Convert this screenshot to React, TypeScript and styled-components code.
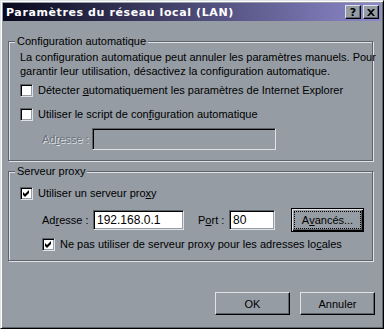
import React from 'react'
import styled, { createGlobalStyle } from 'styled-components'

const FACE = '#959ca4'
const LIGHT = '#dfe3e8'
const SHADOW = '#5d636a'
const DARK = '#000'

const GlobalStyle = createGlobalStyle`
  html, body {
    margin: 0;
    padding: 0;
    background: ${FACE};
  }
  body {
    font-family: "Liberation Sans", Arial, sans-serif;
    font-size: 11px;
    color: #000;
  }
`

const App = () => {
  return (
    <>
      <GlobalStyle />
      <Window>
        <TitleBar>
          <TitleText>Paramètres du réseau local (LAN)</TitleText>
          <TitleButtons>
            <TitleButton>?</TitleButton>
            <TitleButton>
              <svg width="8" height="7" viewBox="0 0 8 7">
                <path d="M0 0h2l2 2 2-2h2L5 3.5 8 7H6L4 5 2 7H0l3-3.5z" fill="#000" />
              </svg>
            </TitleButton>
          </TitleButtons>
        </TitleBar>

        <Body>
          <Group>
            <Legend>Configuration automatique</Legend>
            <Stack $pt={2} $pb={10}>
              <Description>
                La configuration automatique peut annuler les paramètres manuels. Pour
                <br />
                garantir leur utilisation, désactivez la configuration automatique.
              </Description>
              <CheckRow $mt={4}>
                <CheckBox />
                <span>
                  Détecter <u>a</u>utomatiquement les paramètres de Internet Explorer
                </span>
              </CheckRow>
              <CheckRow $mt={8}>
                <CheckBox />
                <span>
                  Utiliser le script de con<u>f</u>iguration automatique
                </span>
              </CheckRow>
              <FieldRow $mt={6} $h={22}>
                <FieldLabel $w={50} $disabled>
                  Ad<u>r</u>esse :
                </FieldLabel>
                <TextField $w={184} $h={22} $disabled />
              </FieldRow>
            </Stack>
          </Group>

          <Group $mt={3}>
            <Legend>Serveur proxy</Legend>
            <Stack $pt={7} $pb={8}>
              <CheckRow>
                <CheckBox checked />
                <span>
                  Utiliser un serveur pro<u>x</u>y
                </span>
              </CheckRow>
              <FieldRow $mt={7} $h={24}>
                <FieldLabel $w={51}>
                  Ad<u>r</u>esse :
                </FieldLabel>
                <TextField $w={91} $h={20}>192.168.0.1</TextField>
                <FieldLabel $w={31} $ml={14}>
                  P<u>o</u>rt :
                </FieldLabel>
                <TextField $w={46} $h={20}>80</TextField>
                <DefaultButton>
                  <FocusRing>
                    A<u>v</u>ancés...
                  </FocusRing>
                </DefaultButton>
              </FieldRow>
              <CheckRow $mt={4} $ml={22}>
                <CheckBox checked />
                <span>
                  Ne pas utiliser de serveur proxy pour les adresses lo<u>c</u>ales
                </span>
              </CheckRow>
            </Stack>
          </Group>

          <ButtonBar>
            <PushButton>OK</PushButton>
            <PushButton>Annuler</PushButton>
          </ButtonBar>
        </Body>
      </Window>
    </>
  )
}

const CheckBox = ({ checked }: { checked?: boolean }) => (
  <Box>
    {checked && (
      <svg width="7" height="7" viewBox="0 0 7 7">
        <path d="M0 2l2 2 4-4v3L2 7 0 5z" fill="#000" />
      </svg>
    )}
  </Box>
)

export default App

const Window = styled.div`
  width: 384px;
  height: 329px;
  box-sizing: border-box;
  border: 1px solid;
  border-color: ${LIGHT} ${DARK} ${DARK} ${LIGHT};
  box-shadow: inset 1px 1px 0 #fff, inset -1px -1px 0 ${SHADOW};
  padding: 2px;
  background: ${FACE};
  display: flex;
  flex-direction: column;
  overflow: hidden;
`

const TitleBar = styled.div`
  height: 18px;
  flex-shrink: 0;
  display: flex;
  align-items: center;
  padding-left: 3px;
  background: linear-gradient(to right, #08081c, #8d89cc);
`

const TitleText = styled.div`
  flex: 1;
  color: #fff;
  font-family: "DejaVu Sans", Verdana, sans-serif;
  font-weight: bold;
  font-size: 11px;
  letter-spacing: 0.6px;
  white-space: nowrap;
`

const TitleButtons = styled.div`
  display: flex;
  gap: 2px;
  margin-right: 2px;
`

const TitleButton = styled.div`
  width: 16px;
  height: 14px;
  box-sizing: border-box;
  border: 1px solid;
  border-color: ${LIGHT} ${DARK} ${DARK} ${LIGHT};
  box-shadow: inset -1px -1px 0 ${SHADOW};
  background: ${FACE};
  display: flex;
  align-items: center;
  justify-content: center;
  font-family: "DejaVu Sans", sans-serif;
  font-weight: bold;
  font-size: 11px;
  line-height: 1;
`

const Body = styled.div`
  flex: 1;
  display: flex;
  flex-direction: column;
  padding: 13px 8px 0 5px;
`

const Group = styled.fieldset<{ $mt?: number }>`
  margin: ${p => p.$mt ?? 0}px 0 0 0;
  padding: 0;
  min-width: 0;
  border: 1px solid ${SHADOW};
  box-shadow: inset 1px 1px 0 ${LIGHT}, 1px 1px 0 ${LIGHT};
`

const Legend = styled.legend`
  margin-left: 6px;
  padding: 0 2px;
  line-height: 14px;
  background: ${FACE};
`

const Stack = styled.div<{ $pt: number; $pb: number }>`
  display: flex;
  flex-direction: column;
  align-items: flex-start;
  padding: ${p => p.$pt}px 0 ${p => p.$pb}px 11px;
`

const Description = styled.div`
  line-height: 14px;
  white-space: nowrap;
`

const CheckRow = styled.div<{ $mt?: number; $ml?: number }>`
  display: flex;
  align-items: center;
  gap: 5px;
  height: 16px;
  margin-top: ${p => p.$mt ?? 0}px;
  margin-left: ${p => p.$ml ?? 0}px;
  white-space: nowrap;
`

const Box = styled.div`
  width: 13px;
  height: 13px;
  box-sizing: border-box;
  border: 1px solid;
  border-color: ${SHADOW} ${LIGHT} ${LIGHT} ${SHADOW};
  box-shadow: inset 1px 1px 0 ${DARK}, inset -1px -1px 0 ${FACE};
  background: #fff;
  display: flex;
  align-items: center;
  justify-content: center;
`

const FieldRow = styled.div<{ $mt: number; $h: number }>`
  display: flex;
  align-items: center;
  height: ${p => p.$h}px;
  margin: ${p => p.$mt}px 0 0 22px;
  white-space: nowrap;
`

const FieldLabel = styled.span<{ $w: number; $ml?: number; $disabled?: boolean }>`
  width: ${p => p.$w}px;
  margin-left: ${p => p.$ml ?? 0}px;
  color: ${p => (p.$disabled ? '#6a7078' : '#000')};
  text-shadow: ${p => (p.$disabled ? `1px 1px 0 ${LIGHT}` : 'none')};
`

const TextField = styled.div<{ $w: number; $h: number; $disabled?: boolean }>`
  width: ${p => p.$w}px;
  height: ${p => p.$h}px;
  box-sizing: border-box;
  border: 1px solid;
  border-color: ${SHADOW} ${LIGHT} ${LIGHT} ${SHADOW};
  box-shadow: inset 1px 1px 0 ${DARK}, inset -1px -1px 0 ${FACE};
  background: ${p => (p.$disabled ? FACE : '#fff')};
  display: flex;
  align-items: center;
  padding-left: 3px;
  font-size: 12px;
`

const ButtonBase = styled.div`
  box-sizing: border-box;
  display: flex;
  align-items: center;
  justify-content: center;
  background: ${FACE};
  border: 1px solid;
  border-color: ${LIGHT} ${DARK} ${DARK} ${LIGHT};
  box-shadow: inset -1px -1px 0 ${SHADOW};
`

const DefaultButton = styled(ButtonBase)`
  width: 73px;
  height: 24px;
  margin-left: 16px;
  border-color: ${DARK};
  box-shadow: inset 1px 1px 0 ${LIGHT}, inset -1px -1px 0 ${DARK}, inset -2px -2px 0 ${SHADOW};
  padding: 2px;
`

const FocusRing = styled.div`
  flex: 1;
  align-self: stretch;
  display: flex;
  align-items: center;
  justify-content: center;
  border: 1px dotted ${DARK};
`

const ButtonBar = styled.div`
  display: flex;
  justify-content: flex-end;
  gap: 10px;
  margin: 31px -2px 0 0;
`

const PushButton = styled(ButtonBase)`
  width: 75px;
  height: 23px;
`
